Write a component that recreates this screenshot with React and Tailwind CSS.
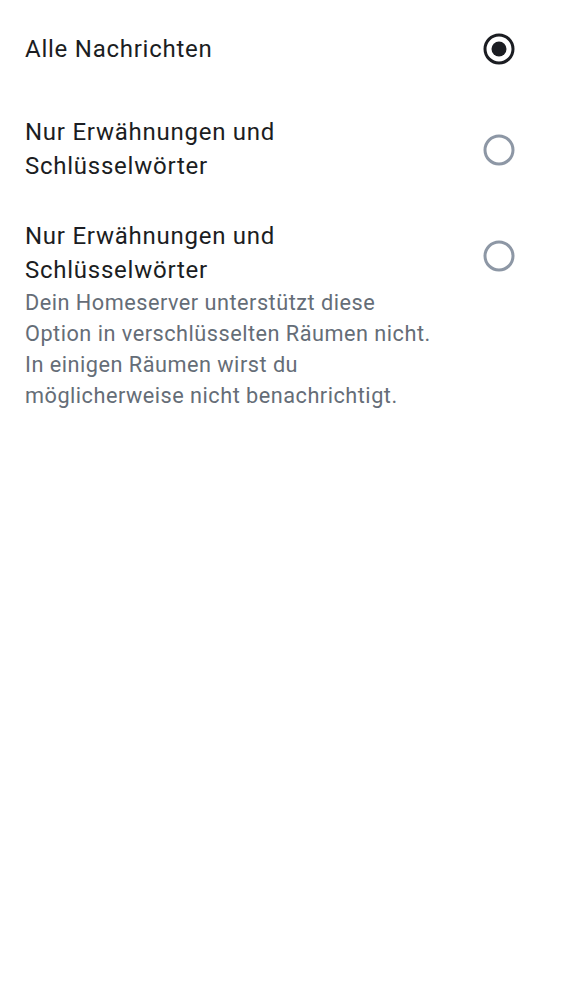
import React from "react";

function Radio({ checked }) {
  if (checked) {
    return (
      <svg className="w-[32px] h-[32px]" viewBox="0 0 32 32" fill="none">
        <circle cx="16" cy="16" r="14" stroke="#1b1d22" strokeWidth="3" />
        <circle cx="16" cy="16" r="7.5" fill="#1b1d22" />
      </svg>
    );
  }
  return (
    <svg className="w-[32px] h-[32px]" viewBox="0 0 32 32" fill="none">
      <circle cx="16" cy="16" r="14" stroke="#8d97a5" strokeWidth="3" />
    </svg>
  );
}

export default function App() {
  return (
    <div className="min-h-screen bg-white pt-[32px] px-[25px] font-['Roboto',sans-serif] text-[#1b1d22]">
      {/* Alle Nachrichten */}
      <div className="flex items-center justify-between">
        <div className="w-[412px] text-[24px] leading-[34px] tracking-[0.75px]">Alle Nachrichten</div>
        <div className="mr-[22px]">
          <Radio checked />
        </div>
      </div>

      {/* Mentions and keywords */}
      <div className="flex items-center justify-between mt-[49px]">
        <div className="w-[412px] text-[24px] leading-[34px] tracking-[0.75px]">Nur Erwähnungen und Schlüsselwörter</div>
        <div className="mr-[22px] mt-[2px]">
          <Radio />
        </div>
      </div>

      {/* Mentions and keywords, unsupported */}
      <div className="flex items-start justify-between mt-[36px]">
        <div className="w-[412px]">
          <div className="text-[24px] leading-[34px] tracking-[0.75px]">Nur Erwähnungen und Schlüsselwörter</div>
          <div className="text-[21.7px] leading-[31px] tracking-[0.5px] text-[#656d77]">
            Dein Homeserver unterstützt diese Option in verschlüsselten Räumen nicht. In einigen Räumen wirst du möglicherweise nicht benachrichtigt.
          </div>
        </div>
        <div className="mr-[22px] mt-[21px]">
          <Radio />
        </div>
      </div>
    </div>
  );
}
